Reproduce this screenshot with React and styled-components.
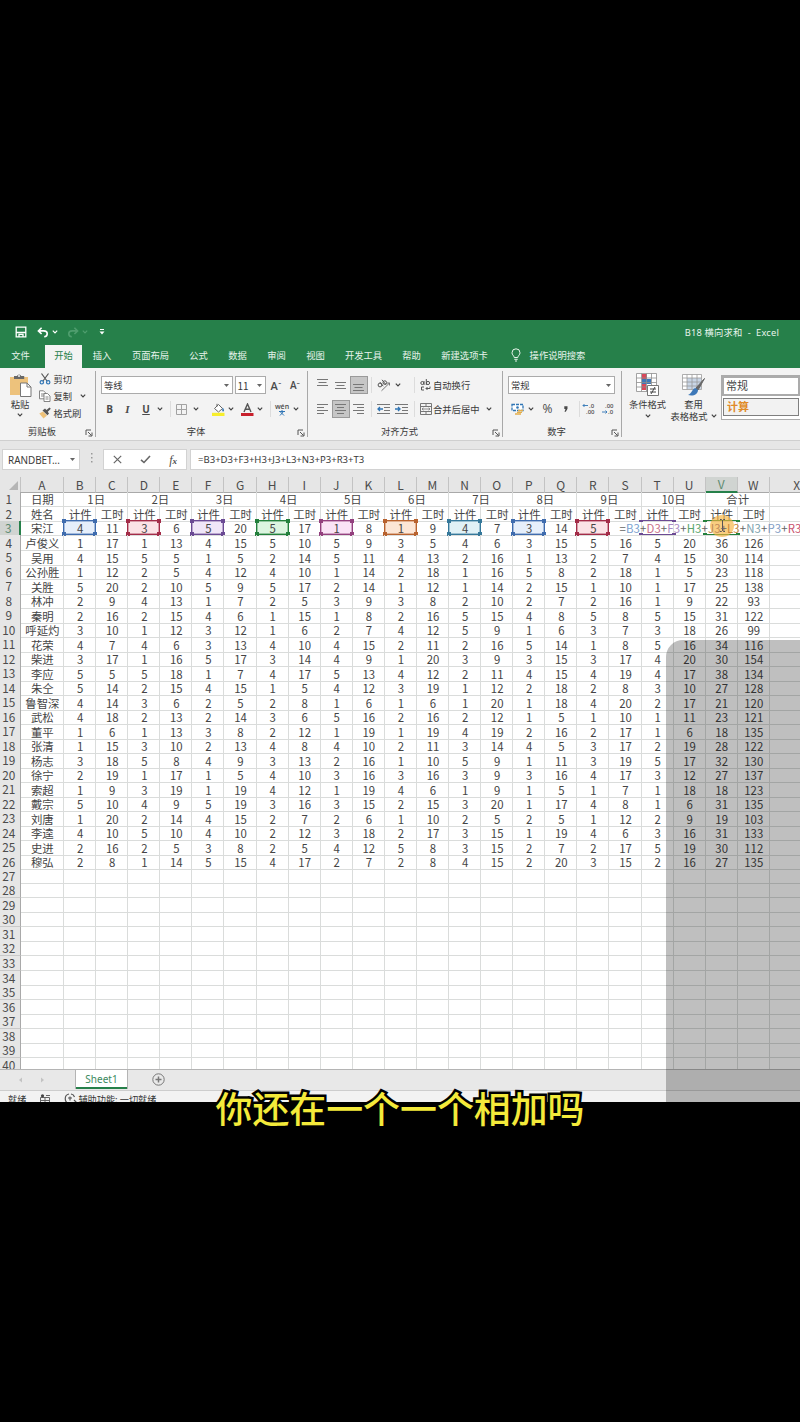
import React from "react";
import styled, { createGlobalStyle, css } from "styled-components";

const GlobalStyle = createGlobalStyle`
  * { box-sizing: border-box; }
  body {
    margin: 0;
    background: #000;
    font-family: "Noto Sans", "Noto Sans CJK SC", sans-serif;
  }
`;

const Page = styled.div`
  width: 800px;
  height: 1422px;
  padding-top: 320px;
  background: #000;
  position: relative;
  overflow: hidden;
`;

const Window = styled.div`
  height: 782px;
  display: flex;
  flex-direction: column;
  background: #e6e6e6;
  overflow: hidden;
  position: relative;
  color: #3a3a3a;
  font-family: "Noto Sans CJK SC", sans-serif;
  font-size: 9.3px;
  white-space: nowrap;
`;

/* ---------- title bar + tabs ---------- */

const TitleBar = styled.div`
  height: 24px;
  flex: none;
  display: flex;
  align-items: center;
  padding: 0 21px 0 13px;
  background: #26804a;
  color: #e8f4ec;
`;

const TitleText = styled.div`
  margin-left: auto;
  font-family: "Noto Sans", "Noto Sans CJK SC", sans-serif;
  font-size: 9.3px;
  letter-spacing: 0.18px;
  padding-bottom: 1px;
  white-space: pre;
`;

const Tabs = styled.div`
  height: 24px;
  flex: none;
  display: flex;
  background: #26804a;
  color: #e8f4ec;
`;

const Tab = styled.div`
  width: ${(p) => p.$w}px;
  display: flex;
  align-items: center;
  justify-content: center;
  padding-bottom: 2px;
  ${(p) =>
    p.$first &&
    css`
      padding-right: 4px;
    `}
  ${(p) =>
    p.$active &&
    css`
      background: #f3f3f3;
      color: #26804a;
      margin-top: 1px;
      padding-bottom: 3px;
    `}
`;

/* ---------- ribbon ---------- */

const Ribbon = styled.div`
  height: 73px;
  flex: none;
  display: flex;
  background: #f3f3f3;
  border-bottom: 1px solid #cfcfcf;
`;

const Group = styled.div`
  width: ${(p) => p.$w}px;
  flex: none;
  display: flex;
  flex-direction: column;
  padding: 5px 0 0 5px;
  border-right: 1px solid #a8a8a8;
  margin: 3px 0;
`;

const GroupRow = styled.div`
  height: 18px;
  display: flex;
  align-items: center;
  margin-bottom: 6px;
`;

const GroupTitle = styled.div`
  height: 12px;
  display: grid;
  grid-template-columns: 1fr 10px;
  align-items: center;
  text-align: center;
  margin-top: auto;
  margin-left: -5px;
  line-height: 12px;
  padding-right: 1px;
  svg { margin: 3px 0 0 1px; }
`;

const Slot = styled.div`
  width: ${(p) => p.$w}px;
  height: 18px;
  flex: none;
  display: flex;
  align-items: center;
  justify-content: center;
  ${(p) =>
    p.$on &&
    css`
      background: #c6c6c6;
      border: 1px solid #9a9a9a;
    `}
`;

const Gap = styled.div`
  width: ${(p) => p.$w}px;
  flex: none;
`;

const Rule = styled.div`
  width: 1px;
  height: 16px;
  flex: none;
  background: #dcdcdc;
`;

const Select = styled.div`
  width: ${(p) => p.$w}px;
  height: 18px;
  flex: none;
  display: flex;
  align-items: center;
  justify-content: space-between;
  padding: 0 3px 0 2px;
  border: 1px solid #ababab;
  background: #fff;
  font-size: ${(p) => p.$size || 9.3}px;
`;

const Letter = styled.span`
  font-family: ${(p) => (p.$serif ? '"Liberation Serif", serif' : '"Open Sans", sans-serif')};
  font-size: ${(p) => p.$size || 10}px;
  font-weight: ${(p) => p.$weight || 700};
  font-style: ${(p) => (p.$italic ? "italic" : "normal")};
  text-decoration: ${(p) => (p.$under ? "underline" : "none")};
  line-height: 1;
  color: #4a4a4a;
`;

const ClipBody = styled.div`
  display: grid;
  grid-template-columns: 34px 1fr;
  margin-top: -3px;
  height: 52px;
`;

const ClipList = styled.div`
  margin-top: -3px;
`;

const Stack = styled.div`
  display: flex;
  flex-direction: column;
  align-items: center;
  line-height: ${(p) => p.$line || 12}px;
  width: ${(p) => (p.$w ? p.$w + "px" : "auto")};
`;

const ClipItem = styled.div`
  height: 17.4px;
  display: flex;
  align-items: center;
  gap: 2.5px;
`;

const StyleGroup = styled.div`
  flex: 1;
  display: flex;
  padding-top: 5px;
`;

const FormatLine = styled.div`
  height: 8px;
  display: flex;
  align-items: center;
  gap: 3px;
`;

const Gallery = styled.div`
  margin: 2px 0 0 5px;
  width: 79px;
  height: 45px;
  border: 1px solid #ababab;
  border-right: 0;
  background: #fff;
  display: flex;
  flex-direction: column;
  gap: 2px;
`;

const StyleBox = styled.div`
  height: ${(p) => (p.$calc ? 18 : 20)}px;
  margin: ${(p) => (p.$calc ? "0 1px" : "0")};
  padding: 0 0 2px ${(p) => (p.$calc ? 3 : 2)}px;
  display: flex;
  align-items: center;
  font-size: 11px;
  border: ${(p) => (p.$calc ? "1px solid #7f7f7f" : "2px solid #ababab")};
  background: ${(p) => (p.$calc ? "#f2f2f2" : "#fff")};
  color: ${(p) => (p.$calc ? "#e08a28" : "#444")};
  font-weight: ${(p) => (p.$calc ? 700 : 400)};
`;

/* ---------- formula bar ---------- */

const FormulaBar = styled.div`
  height: 36px;
  flex: none;
  display: flex;
  align-items: flex-start;
  padding: 8px 0 0 2px;
  font-family: "Noto Sans", "Noto Sans CJK SC", sans-serif;
`;

const Field = styled.div`
  width: ${(p) => p.$w}px;
  height: 21px;
  flex: none;
  display: flex;
  align-items: center;
  justify-content: space-between;
  padding: ${(p) => p.$pad || "0 4px 0 5px"};
  background: #fff;
  border: 1px solid #d2d2d2;
  font-size: ${(p) => p.$size || 9.6}px;
`;

/* ---------- sheet ---------- */

const ROW_H = 14.53;
const GRID_COLS = "20.6px 43.5px repeat(22, 32.08px) 55px";

const Sheet = styled.div`
  height: 592.5px;
  flex: none;
  overflow: hidden;
  background: #fff;
  border-bottom: 1px solid #b4b4b4;
  font-size: 11.4px;
  color: #454545;
`;

const SheetRow = styled.div`
  display: grid;
  grid-template-columns: ${GRID_COLS};
  height: ${(p) => (p.$head ? 14.5 : ROW_H)}px;
  position: relative;
`;

const cellBase = css`
  display: flex;
  align-items: center;
  justify-content: center;
  min-width: 0;
  line-height: 14px;
  white-space: nowrap;
`;

const HeadCell = styled.div`
  ${cellBase}
  font-size: 12px;
  color: ${(p) => (p.$on ? "#5c8a70" : "#4c4c4c")};
  background: ${(p) => (p.$on ? "#d0d4d1" : "#e6e6e6")};
  border-right: 1px solid #c3c3c3;
  border-bottom: ${(p) => (p.$on ? "2px solid #26804a" : "1px solid #a9a9a9")};
`;

const RowHead = styled.div`
  ${cellBase}
  font-size: 11.8px;
  padding: 0 2px 0 0;
  color: ${(p) => (p.$on ? "#5c8a70" : "#4c4c4c")};
  background: ${(p) => (p.$on ? "#d0d4d1" : "#e6e6e6")};
  border-right: ${(p) => (p.$on ? "2px solid #26804a" : "1px solid #a9a9a9")};
  border-bottom: 1px solid #c9c9c9;
`;

const Cell = styled.div`
  ${cellBase}
  grid-column: span ${(p) => p.$span || 1};
  padding: ${(p) => (p.$raised ? 0 : 1)}px 0 0 1px;
  border-right: 1px solid #dadcdb;
  border-bottom: 1px solid #dadcdb;
  position: relative;
`;

const RefBox = styled.div`
  position: absolute;
  inset: -1px -1px 0 -1px;
  border: 1px solid ${(p) => p.$c};
  border-width: ${(p) => (p.$open ? "1px 0" : "1px")};
  box-shadow: ${(p) => (p.$open ? "none" : `inset 0 0 0 1px ${p.$c}66`)};
  background: ${(p) => p.$fill};
  display: flex;
  align-items: center;
  justify-content: center;
  padding: 1px 0 0 1px;
`;

const Handle = styled.i`
  position: absolute;
  width: 4px;
  height: ${(p) => (p.$flat ? 2 : 4)}px;
  background: ${(p) => p.$c};
  ${(p) => p.$v}: ${(p) => (p.$flat ? -1 : -2)}px;
  ${(p) => p.$h}: -2px;
`;

const EditText = styled.div`
  position: absolute;
  left: 619.5px;
  top: 0;
  height: 14.5px;
  display: flex;
  align-items: center;
  letter-spacing: 0.12px;
  color: #666;
`;

const Piece = styled.span`
  color: ${(p) => p.$c};
`;

const CursorSpot = styled.div`
  position: absolute;
  left: 710px;
  top: -6px;
  width: 24px;
  height: 22px;
  border-radius: 50%;
  background: rgba(246, 178, 60, 0.65);
  display: flex;
  align-items: center;
  justify-content: center;
`;

/* ---------- bottom ---------- */

const SheetBar = styled.div`
  height: 21.5px;
  flex: none;
  display: flex;
  align-items: flex-start;
  background: #e8e8e8;
  border-bottom: 1px solid #cdcdcd;
`;

const NavArrows = styled.div`
  width: 75px;
  height: 21px;
  padding-left: 18px;
  display: flex;
  align-items: center;
  gap: 17px;
`;

const SheetTab = styled.div`
  width: 53px;
  height: 19px;
  display: flex;
  align-items: center;
  justify-content: center;
  padding-bottom: 1px;
  background: #fff;
  border: 0 solid #b4b4b4;
  border-width: 0 1px;
  box-shadow: inset 0 -2px #26804a;
  color: #3b8a5e;
  font-family: "Noto Sans", sans-serif;
  font-size: 10px;
`;

const AddSheet = styled.div`
  margin-left: 24px;
  height: 20px;
  display: flex;
  align-items: center;
`;

const StatusBar = styled.div`
  height: 16px;
  flex: none;
  display: flex;
  align-items: center;
  padding-left: 8px;
  background: #f2f2f2;
  font-size: 9.2px;
  color: #333;
`;

const Shade = styled.div`
  position: absolute;
  left: 666px;
  right: 0;
  top: 320px;
  bottom: 0;
  border-top-left-radius: 17px;
  background: rgba(0, 0, 0, 0.25);
`;

const Caption = styled.div`
  position: absolute;
  left: 0;
  width: 800px;
  top: 1081px;
  text-align: center;
  font-family: "Noto Sans CJK SC", sans-serif;
  font-size: 36.9px;
  line-height: 52px;
  font-weight: 500;
  color: #f4ea3a;
  -webkit-text-stroke: 5px #000;
  paint-order: stroke fill;
`;

/* ---------- icons ---------- */

const Chevron = ({ color = "#444" }) => (
  <svg width="6" height="4" viewBox="0 0 6 4" fill="none" stroke={color} strokeWidth="1.2">
    <path d="M.8 .7 3 2.9 5.2 .7" />
  </svg>
);

const Caret = ({ size = 5 }) => (
  <svg width={size} height={size * 0.6} viewBox="0 0 5 3">
    <path d="M0 0h5L2.5 3z" fill="#666" />
  </svg>
);

const Launcher = () => (
  <svg width="8" height="8" viewBox="0 0 8 8" fill="none" stroke="#555" strokeWidth="1">
    <path d="M1 6V1h5M3 3l3.5 3.5M7 3.5V7H3.5" />
  </svg>
);

const Lines = ({ rows, color = "#777" }) => (
  <svg width="12" height="12" viewBox="0 0 12 12" stroke={color} strokeWidth="1">
    {rows.map(([x1, x2, y]) => (
      <path key={y} d={`M${x1} ${y}H${x2}`} />
    ))}
  </svg>
);

const IndentIcon = ({ out }) => (
  <svg width="13" height="11" viewBox="0 0 13 11" fill="none" stroke="#777">
    <path d="M0 .5h13M7 3.5h6M7 6.5h6M0 9.5h13" />
    <path d={out ? "M6 5H1M3 3 1 5l2 2" : "M0 5h5M3 3l2 2-2 2"} stroke="#2f75b5" strokeWidth="1.3" />
  </svg>
);

const SaveIcon = () => (
  <svg width="12" height="12" viewBox="0 0 12 12" fill="none" stroke="#fff" strokeWidth="1.3">
    <path d="M1.2 1.2h9.6v9.6H1.2zM1.5 6.5h9M4 10.5V8.3h4v2.5" />
  </svg>
);

const UndoIcon = ({ flip, color = "#fff" }) => (
  <svg width="12" height="11" viewBox="0 0 12 11" fill="none" stroke={color} strokeWidth="1.6">
    <g transform={flip ? "translate(12 0) scale(-1 1)" : undefined}>
      <path d="M4.6.8 1.4 3.9l3.2 3.1M1.6 3.9h5.2c4.6 0 4.4 5.6.4 5.8" />
    </g>
  </svg>
);

const PasteIcon = () => (
  <svg width="23" height="24" viewBox="0 0 23 24">
    <path d="M1 4h18v18H1z" fill="#edc27c" />
    <path d="M5 6V3h3a2.2 2.2 0 0 1 4.2 0h3v3z" fill="#686868" />
    <circle cx="10" cy="3" r="1" fill="#f3f3f3" />
    <path d="M11.5 10H18l4 4v9.5H11.5z" fill="#fff" stroke="#777" />
    <path d="M18 10v4h4" fill="none" stroke="#777" />
  </svg>
);

const ScissorsIcon = () => (
  <svg width="12" height="12" viewBox="0 0 12 12" fill="none">
    <path d="M2.5.5 8 8M9.5.5 4 8" stroke="#555" strokeWidth="1.2" />
    <circle cx="2.8" cy="9.3" r="1.7" stroke="#2f75b5" strokeWidth="1.2" />
    <circle cx="9.2" cy="9.3" r="1.7" stroke="#2f75b5" strokeWidth="1.2" />
  </svg>
);

const CopyIcon = () => (
  <svg width="12" height="12" viewBox="0 0 12 12" fill="#fff" stroke="#777" strokeWidth=".9">
    <path d="M.5.8h4l2 2v6h-6zM2 4h3M2 6h3" />
    <path d="M5 3.5h3.5L11 6v5.5H5zM6.5 7h3M6.5 9h3" />
  </svg>
);

const BrushIcon = () => (
  <svg width="12" height="12" viewBox="0 0 12 12">
    <path d="M.3 6.5 4 4.5l4 4-3.5 3z" fill="#eec27a" />
    <path d="M3.5 3.5 6 1.5 7.5 3l3-2.5 1.3 1.3-3 3L10 6.500 8.500 8.300z" fill="#555" />
  </svg>
);

const BorderIcon = () => (
  <svg width="11" height="11" viewBox="0 0 11 11" fill="none" stroke="#a2a2a2">
    <path d="M.5.5h10v10H.5zM5.5.5v10M.5 5.5h10" />
  </svg>
);

const FillIcon = () => (
  <svg width="13" height="13" viewBox="0 0 13 13">
    <path d="M2.5 5.5l4-4 4 4-4 3.5z" fill="#fff" stroke="#666" />
    <path d="M5 3.5V.8" stroke="#666" />
    <path d="M10.8 4.5c1.5 1.8 1.600 4 .3 4s-1-2-.3-4z" fill="#2f75b5" />
    <path d="M0 9.8h12.5V13H0z" fill="#f7ee2c" />
  </svg>
);

const FontColorIcon = () => (
  <svg width="13" height="13" viewBox="0 0 13 13">
    <path d="M3 9 6.5 1 10 9M4.3 6.3h4.5" fill="none" stroke="#555" strokeWidth="1.4" />
    <path d="M0 10h12.5v3H0z" fill="#c8202c" />
  </svg>
);

const OrientIcon = () => (
  <svg width="14" height="13" viewBox="0 0 14 13" fill="none" stroke="#555">
    <circle cx="3" cy="6" r="1.9" />
    <path d="M3 3.2l3.200 4M5 .8l4 5" />
    <circle cx="7.8" cy="3.6" r="1.8" />
    <path d="M4.5 11.8l8-7.800M10 4h2.5v2.5" stroke="#777" />
  </svg>
);

const WrapIcon = () => (
  <svg width="11" height="12" viewBox="0 0 11 12" fill="none" stroke="#555" strokeWidth="1">
    <circle cx="2.3" cy="4" r="1.5" />
    <path d="M4 2v4M6.3 0v6" />
    <circle cx="8" cy="4" r="1.6" />
    <path d="M4 8H1.5v3H4M10 7.5v2H6M7.5 8 6 9.5 7.5 11" />
  </svg>
);

const MergeIcon = () => (
  <svg width="12" height="12" viewBox="0 0 12 12" fill="none" stroke="#777">
    <path d="M.5.5h11v11H.5zM.5 3.5h11M.5 8.5h11M6 .5v3M6 8.5v3" />
    <path d="M2 6h8M3.5 4.8 2 6l1.5 1.2M8.5 4.8 10 6 8.5 7.2" strokeWidth=".8" />
  </svg>
);

const MoneyIcon = () => (
  <svg width="13" height="12" viewBox="0 0 13 12" fill="none">
    <path d="M1 1.5h11v6H1z" stroke="#2f75b5" strokeWidth="1.3" strokeDasharray="3 1" fill="#fff" />
    <circle cx="6.5" cy="4.5" r="1.3" fill="#2f75b5" />
    <path d="M7 7.5h5M6 9.3h5M4 11h6" stroke="#e3ae4c" strokeWidth="1.3" />
  </svg>
);

const DecimalIcon = ({ less }) => (
  <svg width="15" height="14" viewBox="-1 -1 15 14" fill="#555" fontSize="6" fontFamily="Open Sans, sans-serif" fontWeight="600">
    <text x={less ? 3 : 6} y="4.5">{less ? ".00" : ".0"}</text>
    <text x={less ? 6 : 3} y="11">{less ? ".0" : ".00"}</text>
    <path d={less ? "M0 9h5M3.5 7.5 5 9l-1.5 1.5" : "M5 2.5H0M1.5 1 0 2.5 1.5 4"} fill="none" stroke="#2f75b5" strokeWidth=".9" />
  </svg>
);

const CondIcon = () => (
  <svg width="23" height="24" viewBox="0 0 23 24" fill="none">
    <path d="M.5.5h20v18H.5z" fill="#fff" />
    <path d="M6 1h5v5H6zM6 11h4v6H6z" fill="#d9485a" />
    <path d="M6 6h9v5H6z" fill="#3d78b8" />
    <path d="M.5.5h20v18H.5zM.5 5h20M.5 9.5h20M.5 14h20M5.5.5v18M10.5.5v18M15.5.5v18" stroke="#8d8d8d" strokeWidth=".8" />
    <path d="M11.5 12.5h11v10h-11z" fill="#fff" stroke="#777" />
    <path d="M14 16h6M14 19h6M19 14l-4 7" stroke="#444" />
  </svg>
);

const TableFormatIcon = () => (
  <svg width="23" height="24" viewBox="0 0 23 24" fill="none">
    <path d="M.5 1.5h19v15H.5z" fill="#fff" />
    <path d="M5 5h14v11H5z" fill="#c9d6e6" />
    <path d="M.5 1.5h19v15H.5zM.5 5h19M.5 9h19M.5 13h19M5 1.5v15M10 1.5v15M15 1.5v15" stroke="#9a9a9a" strokeWidth=".8" />
    <path d="M22.5 5.5 14 15l2 2z" fill="#666" stroke="#666" />
    <path d="M13.5 15c-4 1-3 5-7.5 7 5 1.5 10-.5 10-5z" fill="#3d78b8" />
  </svg>
);

const BulbIcon = () => (
  <svg width="10" height="14" viewBox="0 0 10 14" fill="none" stroke="#e8f4ec" strokeWidth="1">
    <path d="M3.2 9.5C3 7.5 1 7 1 4.8a4 4 0 0 1 8 0C9 7 7 7.5 6.8 9.5zM3.3 11.3h3.4M4 13h2" />
  </svg>
);

/* ---------- data ---------- */

const TABS = [
  ["文件", 45], ["开始", 37], ["插入", 40], ["页面布局", 57], ["公式", 39], ["数据", 39],
  ["审阅", 39], ["视图", 39], ["开发工具", 57], ["帮助", 39], ["新建选项卡", 67],
];

const LETTERS = "ABCDEFGHIJKLMNOPQRSTUVWX".split("");
const DAYS = ["1日", "2日", "3日", "4日", "5日", "6日", "7日", "8日", "9日", "10日", "合计"];

const ROWS = `宋江 4 11 3 6 5 20 5 17 1 8 1 9 4 7 3 14 5
卢俊义 1 17 1 13 4 15 5 10 5 9 3 5 4 6 3 15 5 16 5 20 36 126
吴用 4 15 5 5 1 5 2 14 5 11 4 13 2 16 1 13 2 7 4 15 30 114
公孙胜 1 12 2 5 4 12 4 10 1 14 2 18 1 16 5 8 2 18 1 5 23 118
关胜 5 20 2 10 5 9 5 17 2 14 1 12 1 14 2 15 1 10 1 17 25 138
林冲 2 9 4 13 1 7 2 5 3 9 3 8 2 10 2 7 2 16 1 9 22 93
秦明 2 16 2 15 4 6 1 15 1 8 2 16 5 15 4 8 5 8 5 15 31 122
呼延灼 3 10 1 12 3 12 1 6 2 7 4 12 5 9 1 6 3 7 3 18 26 99
花荣 4 7 4 6 3 13 4 10 4 15 2 11 2 16 5 14 1 8 5 16 34 116
柴进 3 17 1 16 5 17 3 14 4 9 1 20 3 9 3 15 3 17 4 20 30 154
李应 5 5 5 18 1 7 4 17 5 13 4 12 2 11 4 15 4 19 4 17 38 134
朱仝 5 14 2 15 4 15 1 5 4 12 3 19 1 12 2 18 2 8 3 10 27 128
鲁智深 4 14 3 6 2 5 2 8 1 6 1 6 1 20 1 18 4 20 2 17 21 120
武松 4 18 2 13 2 14 3 6 5 16 2 16 2 12 1 5 1 10 1 11 23 121
董平 1 6 1 13 3 8 2 12 1 19 1 19 4 19 2 16 2 17 1 6 18 135
张清 1 15 3 10 2 13 4 8 4 10 2 11 3 14 4 5 3 17 2 19 28 122
杨志 3 18 5 8 4 9 3 13 2 16 1 10 5 9 1 11 3 19 5 17 32 130
徐宁 2 19 1 17 1 5 4 10 3 16 3 16 3 9 3 16 4 17 3 12 27 137
索超 1 9 3 19 1 19 4 12 1 19 4 6 1 9 1 5 1 7 1 18 18 123
戴宗 5 10 4 9 5 19 3 16 3 15 2 15 3 20 1 17 4 8 1 6 31 135
刘唐 1 20 2 14 4 15 2 7 2 6 1 10 2 5 2 5 1 12 2 9 19 103
李逵 4 10 5 10 4 10 2 12 3 18 2 17 3 15 1 19 4 6 3 16 31 133
史进 2 16 2 5 3 8 2 5 4 12 5 8 3 15 2 7 2 17 5 19 30 112
穆弘 2 8 1 14 5 15 4 17 2 7 2 8 4 15 2 20 3 15 2 16 27 135`
  .split("\n")
  .map((line) => line.split(" "));

// cell index in row 3 -> colour of the reference frame
const REFS = {
  1: ["#3f6cae", "#e6effb"],
  3: ["#a32c48", "#fbe3e6"],
  5: ["#6b4a94", "#f0e6f8"],
  7: ["#23803c", "#dcf5e0"],
  9: ["#93407e", "#fae3f6"],
  11: ["#b8622e", "#fce6d6"],
  13: ["#35789a", "#e0f1f6"],
  15: ["#3f6cae", "#e6effb"],
  17: ["#a32c48", "#fbe3e6"],
  19: ["#6b4a94", "transparent"],
  21: ["#23803c", "transparent"],
};

const FORMULA = [
  ["B3", "#7a9fd0"], ["D3", "#c9708a"], ["F3", "#a98cc4"], ["H3", "#5aa56c"], ["J3", "#c08a5a"],
  ["L3", "#c9883c"], ["N3", "#7aa0ac"], ["P3", "#7f9cc4"], ["R3", "#c8506c"], ["T3", "#a98cc4"],
];

const Reference = ({ index, children }) => {
  const [color, fill] = REFS[index];
  const open = index > 17;
  return (
    <RefBox $c={color} $fill={fill} $open={open}>
      {children}
      {["top", "bottom"].map((v) =>
        ["left", "right"].map((h) => <Handle key={v + h} $v={v} $h={h} $c={color} $flat={open} />)
      )}
    </RefBox>
  );
};

const DataRow = ({ row, number }) => {
  const cells = [...row, ...Array(24 - row.length).fill("")];
  const active = number === 3;
  return (
    <SheetRow>
      <RowHead $on={active}>{number}</RowHead>
      {cells.map((value, i) => (
        <Cell key={i} $raised={active}>
          {active && REFS[i] ? <Reference index={i}>{value}</Reference> : value}
        </Cell>
      ))}
      {active && (
        <>
          <CursorSpot>
            <svg width="7" height="13" viewBox="0 0 7 13" fill="none" stroke="#555">
              <path d="M1 .5h1.5l1 1 1-1H6M3.5 1.5v10M1 12.5h1.5l1-1 1 1H6" />
            </svg>
          </CursorSpot>
          <EditText>
            =
            {FORMULA.map(([name, color], i) => (
              <React.Fragment key={name}>
                {i > 0 && "+"}
                <Piece $c={color}>{name}</Piece>
              </React.Fragment>
            ))}
          </EditText>
        </>
      )}
    </SheetRow>
  );
};

const SheetGrid = () => (
  <Sheet>
    <SheetRow $head>
      <HeadCell>
        <svg width="18" height="12" viewBox="0 0 18 12">
          <path d="M17 2v9H8z" fill="#b5b5b5" />
        </svg>
      </HeadCell>
      {LETTERS.map((l) => (
        <HeadCell key={l} $on={l === "V"}>{l}</HeadCell>
      ))}
    </SheetRow>
    <SheetRow>
      <RowHead>1</RowHead>
      <Cell $raised>日期</Cell>
      {DAYS.map((d) => (
        <Cell key={d} $span={2} $raised>{d}</Cell>
      ))}
      <Cell />
    </SheetRow>
    <SheetRow>
      <RowHead>2</RowHead>
      <Cell>姓名</Cell>
      {DAYS.map((d) => (
        <React.Fragment key={d}>
          <Cell>计件</Cell>
          <Cell>工时</Cell>
        </React.Fragment>
      ))}
      <Cell />
    </SheetRow>
    {ROWS.map((row, i) => (
      <DataRow key={row[0]} row={row} number={i + 3} />
    ))}
    {Array.from({ length: 14 }, (_, i) => (
      <DataRow key={i} row={[]} number={i + 27} />
    ))}
  </Sheet>
);

const ClipboardGroup = () => (
  <Group $w={96}>
    <ClipBody>
      <Stack $w={30} $line={14}>
        <PasteIcon />
        <span>粘贴</span>
        <FormatLine><Chevron /></FormatLine>
      </Stack>
      <ClipList>
        <ClipItem><ScissorsIcon />剪切</ClipItem>
        <ClipItem><CopyIcon />复制<Gap $w={3} /><Chevron /></ClipItem>
        <ClipItem><BrushIcon />格式刷</ClipItem>
      </ClipList>
    </ClipBody>
    <GroupTitle>剪贴板<Launcher /></GroupTitle>
  </Group>
);

const FontGroup = () => (
  <Group $w={212}>
    <GroupRow>
      <Select $w={132}>等线<Caret /></Select>
      <Gap $w={1.5} />
      <Select $w={31} $size={10}>11<Caret /></Select>
      <Slot $w={21}><Letter $size={11} $weight={600}>A</Letter><Letter $size={7}>ˆ</Letter></Slot>
      <Slot $w={17}><Letter $size={10} $weight={600}>A</Letter><Letter $size={7}>ˇ</Letter></Slot>
    </GroupRow>
    <GroupRow>
      <Slot $w={17}><Letter>B</Letter></Slot>
      <Slot $w={19}><Letter $serif $italic $size={11}>I</Letter></Slot>
      <Slot $w={18}><Letter $under>U</Letter></Slot>
      <Slot $w={10}><Chevron /></Slot>
      <Gap $w={5} />
      <Rule />
      <Slot $w={20}><BorderIcon /></Slot>
      <Slot $w={9}><Chevron /></Slot>
      <Gap $w={10} />
      <Slot $w={16}><FillIcon /></Slot>
      <Slot $w={10}><Chevron /></Slot>
      <Gap $w={3} />
      <Slot $w={16}><FontColorIcon /></Slot>
      <Slot $w={10}><Chevron /></Slot>
      <Gap $w={5} />
      <Rule />
      <Slot $w={22}>
        <Stack $line={7}>
          <Letter $size={7} $weight={600}>wén</Letter>
          <svg width="6" height="6" viewBox="0 0 6 6" fill="none" stroke="#2f75b5">
            <path d="M0 1.5h6M3 0v1.5M1 5.5l3.5-4M5 5.5 1.5 2" />
          </svg>
        </Stack>
      </Slot>
      <Chevron />
    </GroupRow>
    <GroupTitle>字体<Launcher /></GroupTitle>
  </Group>
);

const AlignGroup = () => (
  <Group $w={195}>
    <GroupRow>
      <Slot $w={19}><Lines rows={[[0, 11, 0.5], [1.5, 9.5, 3.5], [0, 11, 6.5]]} /></Slot>
      <Slot $w={18}><Lines rows={[[0, 11, 3.5], [1.5, 9.5, 6.5], [0, 11, 9.5]]} /></Slot>
      <Slot $w={18} $on><Lines rows={[[0, 11, 5.5], [1.5, 9.5, 8.5], [0, 11, 11.5]]} /></Slot>
      <Gap $w={3} />
      <Rule />
      <Slot $w={23}><OrientIcon /></Slot>
      <Chevron />
      <Gap $w={13} />
      <Rule />
      <Gap $w={3} />
      <Slot $w={15}><WrapIcon /></Slot>
      <span>自动换行</span>
    </GroupRow>
    <GroupRow>
      <Slot $w={19}><Lines rows={[[0, 11, 1.5], [0, 7, 4.5], [0, 11, 7.5], [0, 7, 10.5]]} /></Slot>
      <Slot $w={18} $on><Lines rows={[[0, 11, 1.5], [2, 9, 4.5], [0, 11, 7.5], [2, 9, 10.5]]} /></Slot>
      <Slot $w={18}><Lines rows={[[0, 11, 1.5], [4, 11, 4.5], [0, 11, 7.5], [4, 11, 10.5]]} /></Slot>
      <Gap $w={3} />
      <Rule />
      <Slot $w={22}><IndentIcon out /></Slot>
      <Slot $w={15}><IndentIcon /></Slot>
      <Gap $w={5} />
      <Rule />
      <Gap $w={3} />
      <Slot $w={15}><MergeIcon /></Slot>
      <span>合并后居中</span>
      <Gap $w={6.5} />
      <Chevron />
    </GroupRow>
    <GroupTitle>对齐方式<Launcher /></GroupTitle>
  </Group>
);

const NumberGroup = () => (
  <Group $w={119}>
    <GroupRow>
      <Select $w={107}>常规<Caret /></Select>
    </GroupRow>
    <GroupRow>
      <Slot $w={18}><MoneyIcon /></Slot>
      <Slot $w={9}><Chevron /></Slot>
      <Slot $w={25}><Letter $size={12} $weight={400}>%</Letter></Slot>
      <Slot $w={11}>
        <svg width="4" height="6" viewBox="0 0 4 6" fill="#4a4a4a">
          <path d="M.3.3h3.200v2.400L1.800 5.700H.5l1-2.700H.3z" />
        </svg>
      </Slot>
      <Gap $w={8} />
      <Rule />
      <Slot $w={18}><DecimalIcon /></Slot>
      <Slot $w={20}><DecimalIcon less /></Slot>
    </GroupRow>
    <GroupTitle>数字<Launcher /></GroupTitle>
  </Group>
);

const App = () => (
  <Page>
    <GlobalStyle />
    <Window>
      <TitleBar>
        <Slot $w={15}><SaveIcon /></Slot>
        <Gap $w={8} />
        <Slot $w={14}><UndoIcon /></Slot>
        <Slot $w={10}><Chevron color="#fff" /></Slot>
        <Gap $w={6} />
        <Slot $w={13}><UndoIcon flip color="#4f9d6e" /></Slot>
        <Slot $w={12}><Chevron color="#4f9d6e" /></Slot>
        <Gap $w={8} />
        <svg width="6" height="6" viewBox="0 0 6 6">
          <path d="M1 0h4v1H1zM.5 2.5h5L3 5.5z" fill="#fff" />
        </svg>
        <TitleText>B18 横向求和  -  Excel</TitleText>
      </TitleBar>
      <Tabs>
        {TABS.map(([name, w], i) => (
          <Tab key={name} $w={w} $first={i === 0} $active={i === 1}>{name}</Tab>
        ))}
        <Tab $w={35}><BulbIcon /></Tab>
        <Tab $w={49}>操作说明搜索</Tab>
      </Tabs>
      <Ribbon>
        <ClipboardGroup />
        <FontGroup />
        <AlignGroup />
        <NumberGroup />
        <StyleGroup>
          <Stack $w={51} $line={15}>
            <CondIcon />
            <span>条件格式</span>
            <FormatLine><Chevron /></FormatLine>
          </Stack>
          <Stack $w={41} $line={15}>
            <TableFormatIcon />
            <span>套用</span>
            <FormatLine>表格格式<Chevron /></FormatLine>
          </Stack>
          <Gap $w={2} />
          <Gallery>
            <StyleBox>常规</StyleBox>
            <StyleBox $calc>计算</StyleBox>
          </Gallery>
        </StyleGroup>
      </Ribbon>
      <FormulaBar>
        <Field $w={78} $size={9.9}>RANDBET...<Caret /></Field>
        <Slot $w={23}>
          <svg width="2" height="10" viewBox="0 0 2 10" fill="#999">
            <path d="M0 0h1.5v1.5H0zM0 4h1.5v1.5H0zM0 8h1.5v1.5H0z" />
          </svg>
        </Slot>
        <Field $w={84} $pad="0 9px 0 9px">
          <svg width="9" height="9" viewBox="0 0 9 9" stroke="#666" strokeWidth="1.2">
            <path d="M.8.8l7.4 7.4M8.2.8.8 8.2" />
          </svg>
          <svg width="11" height="9" viewBox="0 0 11 9" fill="none" stroke="#666" strokeWidth="1.6">
            <path d="M1 4.8l3 2.7L10 1" />
          </svg>
          <Letter $serif $italic $size={12} $weight={400}>f<Letter $serif $italic $size={9}>x</Letter></Letter>
        </Field>
        <Gap $w={3} />
        <Field $w={612} $pad="0 7px" $size={9.55}>=B3+D3+F3+H3+J3+L3+N3+P3+R3+T3</Field>
      </FormulaBar>
      <SheetGrid />
      <SheetBar>
        <NavArrows>
          <svg width="5" height="6" viewBox="0 0 5 6"><path d="M4 .5v5L1 3z" fill="#c3c3c3" /></svg>
          <svg width="5" height="6" viewBox="0 0 5 6"><path d="M1 .5v5L4 3z" fill="#c3c3c3" /></svg>
        </NavArrows>
        <SheetTab>Sheet1</SheetTab>
        <AddSheet>
          <svg width="13" height="13" viewBox="0 0 13 13" fill="none" stroke="#777">
            <circle cx="6.5" cy="6.5" r="5.7" />
            <path d="M6.5 3.5v6M3.5 6.5h6" strokeWidth="1.5" />
          </svg>
        </AddSheet>
      </SheetBar>
      <StatusBar>
        就绪
        <Gap $w={14} />
        <svg width="11" height="10" viewBox="0 0 11 10" fill="none" stroke="#666">
          <path d="M.5 3.5h9v6h-9zM.5 6.5h9M5 3.5v6M6 1.5h4" />
          <circle cx="2.5" cy="1.8" r="1.6" fill="#444" stroke="none" />
        </svg>
        <Gap $w={13} />
        <svg width="13" height="12" viewBox="0 0 13 12" fill="none" stroke="#555" strokeWidth="1.2">
          <path d="M5 1C0 2 0 9 5 11M7 1c2 .3 3 1.5 3.5 3M6 3.5v4M4 5h4M10 7l2 2-2 2" />
        </svg>
        <Gap $w={1} />
        辅助功能: 一切就绪
      </StatusBar>
      <Shade />
    </Window>
    <Caption>你还在一个一个相加吗</Caption>
  </Page>
);

export default App;
